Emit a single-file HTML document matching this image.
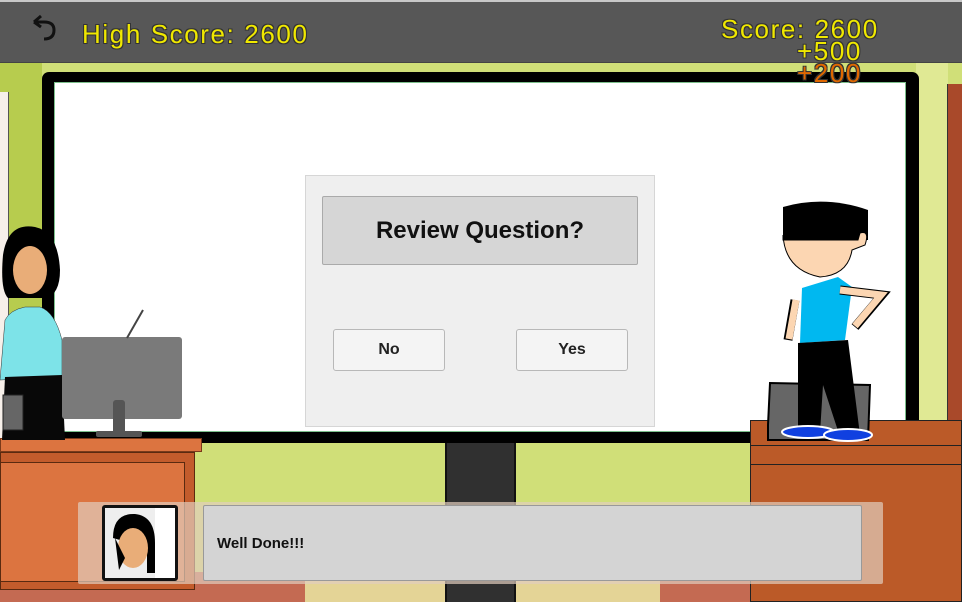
<!DOCTYPE html>
<html><head><meta charset="utf-8"><style>
*{margin:0;padding:0;box-sizing:border-box}
body{width:962px;height:602px;position:relative;overflow:hidden;background:#d0df78;font-family:"Liberation Sans",sans-serif}
.a{position:absolute}
.y{color:#f0e800;font-family:"Liberation Sans",sans-serif;font-size:26px;letter-spacing:1.6px;line-height:26px;text-shadow:-1px -1px 0 #333,1px -1px 0 #333,-1px 1px 0 #333,1px 1px 0 #333}
.btn{background:#f4f4f4;border:1px solid #b8b8b8;border-radius:3px;font-size:16px;font-weight:bold;color:#222;display:flex;align-items:center;justify-content:center}
</style></head><body>
<div class="a" style="left:0;top:62px;width:42px;height:380px;background:#b7cc4e"></div>
<div class="a" style="left:0;top:92px;width:9px;height:350px;background:#f7f0ea;border-right:1px solid #555"></div>
<div class="a" style="left:916px;top:62px;width:32px;height:400px;background:#e0e994"></div>
<div class="a" style="left:947px;top:84px;width:15px;height:380px;background:#a9492a;border-left:1px solid #333"></div>
<div class="a" style="left:0;top:572px;width:962px;height:30px;background:#c46a52"></div>
<div class="a" style="left:305px;top:572px;width:355px;height:30px;background:#e4d496"></div>
<div class="a" style="left:42px;top:72px;width:877px;height:371px;background:#000;border-radius:7px"></div>
<div class="a" style="left:54px;top:82px;width:852px;height:350px;background:#fff;border:1px solid #7bbf8b"></div>
<div class="a" style="left:445px;top:443px;width:71px;height:159px;background:#303030;border-left:2px solid #111;border-right:2px solid #111"></div>
<div class="a" style="left:0;top:438px;width:202px;height:14px;background:#dc7440;border:1px solid #7a3a1a"></div>
<div class="a" style="left:0;top:452px;width:195px;height:138px;background:#c35c2c;border:1px solid #5a2a10"></div>
<div class="a" style="left:0;top:462px;width:185px;height:120px;background:#dc7440;border:1px solid #5a2a10"></div>
<div class="a" style="left:750px;top:420px;width:212px;height:182px;background:#bb5a28;border:1px solid #222"></div>
<div class="a" style="left:750px;top:445px;width:212px;height:20px;background:#bb5a28;border:1px solid #222"></div>
<svg class="a" style="left:0;top:220px" width="200" height="220">
<path d="M3 35 Q8 2 35 7 Q58 12 60 50 Q60 75 45 78 L8 78 Q0 70 3 35Z" fill="#000"/>
<ellipse cx="30" cy="50" rx="17" ry="24" fill="#e9ad78"/>
<path d="M14 34 Q25 18 48 30 L48 22 Q30 8 14 22Z" fill="#000"/>
<path d="M5 100 Q10 90 25 87 L40 87 Q55 92 62 120 L62 157 L0 160Z" fill="#7de3e8" stroke="#333" stroke-width=".5"/>
<path d="M5 157 L62 155 L65 220 L2 220Z" fill="#080808"/>
<rect x="3" y="175" width="20" height="35" fill="#666" stroke="#222"/>
<rect x="62" y="117" width="120" height="82" rx="3" fill="#7a7a7a"/>
<line x1="127" y1="118" x2="143" y2="90" stroke="#444" stroke-width="2"/>
<rect x="113" y="180" width="12" height="35" rx="3" fill="#555"/>
<rect x="96" y="211" width="46" height="6" rx="2" fill="#555"/>
</svg>
<svg class="a" style="left:740px;top:195px" width="222" height="265">
<path d="M28 230 L30 188 L130 190 L128 245 L28 245Z" fill="#666" stroke="#000" stroke-width="2"/>
<path d="M43 12 Q85 0 128 15 L128 45 L43 45Z" fill="#000"/>
<path d="M43 40 Q45 75 80 82 Q108 80 112 55 L125 50 Q130 35 120 38 L118 45 L43 45Z" fill="#fcd6b2" stroke="#000"/>
<path d="M62 93 L98 82 L112 92 L105 145 L60 148Z" fill="#00b8f0"/>
<path d="M55 105 L48 145 M100 95 L142 100 L115 132" stroke="#000" stroke-width="9" fill="none"/>
<path d="M56 105 L49 144 M100 95 L141 100 L115 131" stroke="#fcd6b2" stroke-width="7" fill="none"/>
<path d="M58 148 L108 145 L120 240 L100 242 L83 190 L80 238 L58 238Z" fill="#000"/>
<ellipse cx="68" cy="237" rx="26" ry="6" fill="#1040e0" stroke="#fff" stroke-width="2"/>
<ellipse cx="108" cy="240" rx="24" ry="6" fill="#1040e0" stroke="#fff" stroke-width="2"/>
</svg>
<div class="a" style="left:0;top:0;width:962px;height:63px;background:#575757;border-top:2px solid #c8c8c8;border-bottom:1px solid #444"></div>
<svg class="a" style="left:30px;top:14px" width="30" height="30"><path d="M6 8 L14 8 Q24 8 24 16 Q24 25 14 25" fill="none" stroke="#111" stroke-width="3"/><path d="M4 8 L11 2 M4 8 L11 13" stroke="#111" stroke-width="3" fill="none"/></svg>
<div class="a y" style="left:82px;top:21px">High Score: 2600</div>
<div class="a y" style="left:721px;top:16px">Score: 2600</div>
<div class="a y" style="left:797px;top:38px">+500</div>
<div class="a y" style="left:797px;top:60px;color:#e06800">+200</div>
<div class="a" style="left:305px;top:175px;width:350px;height:252px;background:#efefef;border:1px solid #d6d6d6"></div>
<div class="a" style="left:322px;top:196px;width:316px;height:69px;background:#d6d6d6;border:1px solid #aaa;border-radius:2px;display:flex;align-items:center;justify-content:center;font-size:24px;font-weight:bold;color:#111">Review Question?</div>
<div class="a btn" style="left:333px;top:329px;width:112px;height:42px">No</div>
<div class="a btn" style="left:516px;top:329px;width:112px;height:42px">Yes</div>
<div class="a" style="left:78px;top:502px;width:805px;height:82px;background:rgba(225,205,190,.7);border-radius:2px"></div>
<div class="a" style="left:102px;top:505px;width:76px;height:76px;background:#fff;border:3px solid #111;border-radius:3px;overflow:hidden">
<svg width="70" height="70"><rect width="50" height="70" fill="#eee"/><path d="M8 30 Q8 5 30 6 Q50 8 50 35 L50 65 L42 65 L42 40 Z" fill="#000"/><ellipse cx="28" cy="40" rx="15" ry="20" fill="#e9ad78"/><path d="M14 28 Q22 12 45 25 L45 18 Q30 5 14 18Z" fill="#000"/><path d="M10 30 L14 62 L20 50Z" fill="#000"/></svg></div>
<div class="a" style="left:203px;top:505px;width:659px;height:76px;background:#d4d4d4;border:1px solid #999;border-radius:2px;display:flex;align-items:center;padding-left:13px;font-size:15px;font-weight:bold;color:#111">Well Done!!!</div>
</body></html>
